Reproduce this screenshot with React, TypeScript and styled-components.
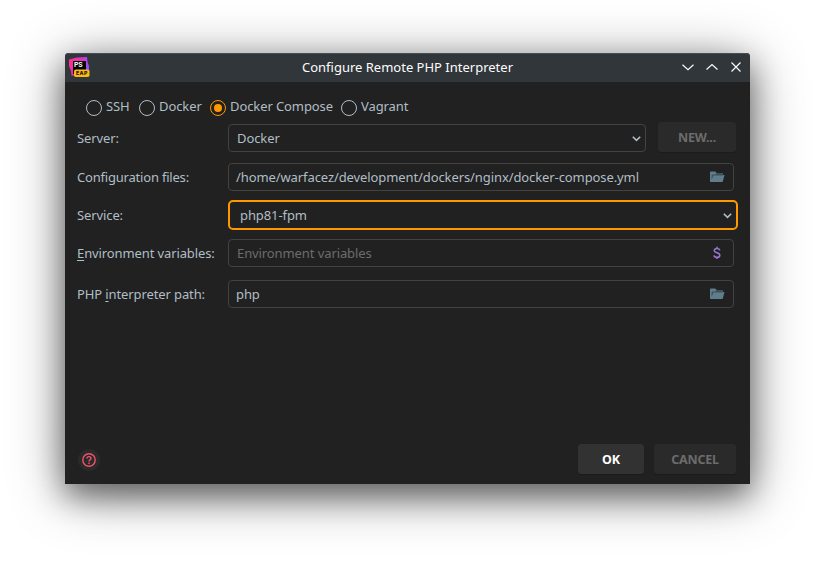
import React from 'react';
import styled, { createGlobalStyle } from 'styled-components';

const GlobalStyle = createGlobalStyle`
  * { box-sizing: border-box; }
  body {
    margin: 0;
    background: #fff;
    font-family: "Noto Sans", sans-serif;
    font-size: 13px;
    line-height: 18px;
    letter-spacing: -0.095px;
    color: #b0bec5;
  }
  svg { display: block; flex: none; }
`;

const Desktop = styled.main`
  width: 815px;
  height: 561px;
  padding: 53px 65px 77px;
  overflow: hidden;
`;

const Dialog = styled.section`
  display: flex;
  flex-direction: column;
  height: 431px;
  background: #212121;
  border-radius: 4px 4px 0 0;
  box-shadow: 0 12px 30px rgba(0, 0, 0, 0.45), 0 9px 56px rgba(0, 0, 0, 0.42);
`;

const TitleBar = styled.header`
  display: grid;
  grid-template-columns: 66px 1fr 66px;
  align-items: center;
  height: 29px;
  padding: 0 4px;
  background: #31363b;
  border-radius: 4px 4px 0 0;
  box-shadow: inset 0 1px #464d54;
`;

const Title = styled.h1`
  margin: 0;
  padding-bottom: 2px;
  font-size: 13px;
  font-weight: 400;
  letter-spacing: 0;
  text-align: center;
  color: #fcfcfc;
`;

const WindowControls = styled.div`
  display: flex;
  justify-content: flex-end;
  gap: 8px;
  padding: 0 2px 2px 0;
`;

const Radios = styled.div`
  display: flex;
  height: 42px;
  padding: 15px 0 0 21px;
`;

const RadioOption = styled.label<{ $width: number }>`
  display: flex;
  gap: 3px;
  width: ${(p) => p.$width}px;
  white-space: nowrap;
`;

const RadioMark = styled.span<{ $checked?: boolean }>`
  display: grid;
  place-items: center;
  flex: none;
  width: 16px;
  height: 16px;
  margin: 3px 1px 0 0;
  border: 1px solid ${(p) => (p.$checked ? '#ff9800' : '#b0bec5')};
  border-radius: 50%;

  &::after {
    content: "";
    width: 8px;
    height: 8px;
    border-radius: 50%;
    background: ${(p) => (p.$checked ? '#ff9800' : 'transparent')};
  }
`;

const FormRow = styled.div<{ $gap?: number }>`
  display: grid;
  grid-template-columns: 151px 1fr;
  align-items: center;
  margin-bottom: ${(p) => p.$gap ?? 0}px;
  padding: 0 16px 0 12px;
`;

const Label = styled.label<{ $tight?: boolean }>`
  white-space: nowrap;
  letter-spacing: ${(p) => (p.$tight ? -0.2 : -0.11)}px;

  u {
    text-underline-offset: 2px;
    text-decoration-thickness: 1px;
  }
`;

const ServerControls = styled.div`
  display: flex;
  align-items: center;
  height: 28px;
  margin-right: -2px;
  gap: 12px;
`;

const Field = styled.div<{ $indent?: number; $end?: number }>`
  display: flex;
  flex: 1;
  align-items: center;
  justify-content: space-between;
  height: 28px;
  padding: 0 ${(p) => p.$end ?? 8}px 0 ${(p) => p.$indent ?? 7}px;
  border: 1px solid #424242;
  border-radius: 4px;
  white-space: nowrap;
`;

const FocusedField = styled(Field)`
  height: 30px;
  margin-right: -4px;
  padding: 0 4px 0 10px;
  border: 2px solid #ff9800;
  border-radius: 5px;
`;

const Placeholder = styled.span`
  color: #6c6c6c;
`;

const Button = styled.button<{ $width: number; $primary?: boolean }>`
  width: ${(p) => p.$width}px;
  height: 30px;
  padding: 1px 0 0;
  border: 0;
  border-radius: 3px;
  background: ${(p) => (p.$primary ? '#323232' : '#2a2a2a')};
  box-shadow: 0 1px 1px rgba(0, 0, 0, 0.18);
  color: ${(p) => (p.$primary ? '#fff' : '#6c6c6c')};
  font: 700 12.5px/18px "Noto Sans", sans-serif;
  letter-spacing: -0.2px;
`;

const NewButton = styled(Button)`
  flex: none;
  margin-top: -2px;
`;

const Footer = styled.footer`
  display: flex;
  align-items: center;
  gap: 10px;
  height: 30px;
  margin: auto 14px 10px 13px;
`;

const HelpButton = styled.span`
  display: grid;
  place-items: center;
  width: 22px;
  height: 22px;
  margin: 2px auto 0 0;
  border-radius: 50%;
  background: #2a2a2a;
`;

function AppLogo() {
  return (
    <svg width="21" height="21" viewBox="0 0 21 21">
      <defs>
        <linearGradient id="logo" x1="0" y1="0.3" x2="1" y2="0.6">
          <stop offset="0" stopColor="#ff318c" />
          <stop offset="0.45" stopColor="#e62fb5" />
          <stop offset="0.8" stopColor="#b345f1" />
          <stop offset="1" stopColor="#765af8" />
        </linearGradient>
      </defs>
      <path d="M0 2.5 8 .5 18 0l.5 5 1.5 4v5l-9 5-8.5-.5L2 14 0 9Z" fill="url(#logo)" />
      <rect x="4" y="4" width="13" height="13" fill="#000" />
      <text x="5" y="10" fill="#fff" fontFamily="Inter" fontWeight="700" fontSize="6.8">PS</text>
      <rect x="5" y="12.5" width="15.5" height="7.5" rx="1.8" fill="#fcb813" />
      <text x="6.9" y="18.2" fill="#19140a" fontFamily="Inter" fontWeight="800" fontSize="5.2" textLength="11.5">EAP</text>
    </svg>
  );
}

function ControlIcon({ d }: { d: string }) {
  return (
    <svg width="16" height="16" viewBox="0 0 16 16" fill="none" stroke="#fcfcfc" strokeWidth="1.15">
      <path d={d} />
    </svg>
  );
}

function Chevron() {
  return (
    <svg width="10" height="8" viewBox="0 0 10 8" fill="none" stroke="#b0bec5" strokeWidth="1.6">
      <path d="m1.8 2.8 3.7 3.6 3.7-3.6" />
    </svg>
  );
}

function FolderIcon() {
  return (
    <svg width="15" height="12" viewBox="0 0 15 12">
      <path d="M0 10.2V1.3Q0 .5.8.5h4.4L6.8 2h5.4q.8 0 .8.8V4h1.5l-1.7 6.4q-.2.6-.8.6H.8Q0 11 0 10.2Z" fill="#607d8b" />
      <path d="M6.2 2h6q.8 0 .8.8V4.6H3.4L1.6 9V4.2q0-.6.6-.6h3.2Z" fill="#3d525c" />
    </svg>
  );
}

function DollarIcon() {
  return (
    <svg width="8" height="14" viewBox="0 0 8 14" fill="none" stroke="#9575cd" strokeWidth="1.6">
      <path d="M6.8 4.4C6.5 3 5.4 2.5 4 2.5 2.3 2.5 1.2 3.3 1.2 4.5 1.2 7.3 6.8 6.2 6.8 9.2c0 1.3-1.1 2.2-2.8 2.2S1.2 10.7 1 9.3M4 .8v2M4 11v2" />
    </svg>
  );
}

function HelpIcon() {
  return (
    <svg width="14" height="14" viewBox="0 0 14 14" fill="none" stroke="#ef5369" strokeWidth="1.4">
      <circle cx="7" cy="7" r="6.2" />
      <path d="M5 5.5c0-1.3.8-1.9 2-1.9s2 .7 2 1.8C9 6.8 7 6.7 7 8.5M7 9.5v1.4" />
    </svg>
  );
}

export default function App() {
  return (
    <Desktop>
      <GlobalStyle />
      <Dialog>
        <TitleBar>
          <AppLogo />
          <Title>Configure Remote PHP Interpreter</Title>
          <WindowControls>
            <ControlIcon d="m2.5 5.7 5.5 5 5.5-5" />
            <ControlIcon d="m2.5 10.5 5.5-5 5.5 5" />
            <ControlIcon d="m3.5 3.5 9 9m0-9-9 9" />
          </WindowControls>
        </TitleBar>
        <Radios>
          <RadioOption $width={53}><RadioMark />SSH</RadioOption>
          <RadioOption $width={71}><RadioMark />Docker</RadioOption>
          <RadioOption $width={131}><RadioMark $checked />Docker Compose</RadioOption>
          <RadioOption $width={70}><RadioMark />Vagrant</RadioOption>
        </Radios>
        <FormRow $gap={11}>
          <Label>Server:</Label>
          <ServerControls>
            <Field $indent={8} $end={4}>Docker<Chevron /></Field>
            <NewButton $width={78}>NEW...</NewButton>
          </ServerControls>
        </FormRow>
        <FormRow $gap={9}>
          <Label $tight>Configuration files:</Label>
          <Field>/home/warfacez/development/dockers/nginx/docker-compose.yml<FolderIcon /></Field>
        </FormRow>
        <FormRow $gap={9}>
          <Label>Service:</Label>
          <FocusedField>php81-fpm<Chevron /></FocusedField>
        </FormRow>
        <FormRow $gap={13}>
          <Label><u>E</u>nvironment variables:</Label>
          <Field $indent={8} $end={12}><Placeholder>Environment variables</Placeholder><DollarIcon /></Field>
        </FormRow>
        <FormRow>
          <Label>PHP <u>i</u>nterpreter path:</Label>
          <Field>php<FolderIcon /></Field>
        </FormRow>
        <Footer>
          <HelpButton><HelpIcon /></HelpButton>
          <Button $width={66} $primary>OK</Button>
          <Button $width={82}>CANCEL</Button>
        </Footer>
      </Dialog>
    </Desktop>
  );
}
